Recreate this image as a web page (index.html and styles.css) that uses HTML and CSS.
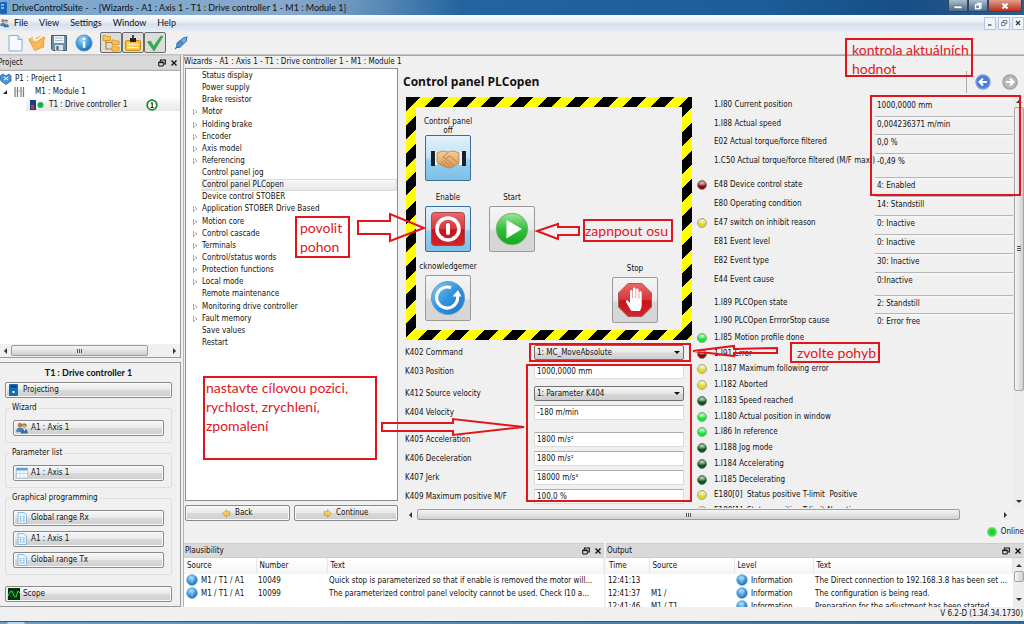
FILE: index.html
```html
<!DOCTYPE html>
<html lang="en">
<head>
<meta charset="utf-8">
<title>DriveControlSuite</title>
<link rel="stylesheet" href="styles.css">
</head>
<body>
<svg class="defs" aria-hidden="true">
  <defs>
    <radialGradient id="gBlue" cx="40%" cy="30%" r="75%"><stop offset="0" stop-color="#a9dcf8"/><stop offset=".55" stop-color="#3f9bdc"/><stop offset="1" stop-color="#1d63ad"/></radialGradient>
    <linearGradient id="gBall" x1="0" y1="0" x2="1" y2="1"><stop offset="0" stop-color="#8ccdf3"/><stop offset=".5" stop-color="#2e93dc"/><stop offset="1" stop-color="#2173c0"/></linearGradient>
    <linearGradient id="gGreen" x1="0" y1="0" x2="0" y2="1"><stop offset="0" stop-color="#9be79b"/><stop offset=".5" stop-color="#35bd3b"/><stop offset="1" stop-color="#14a81c"/></linearGradient>
    <linearGradient id="gRed" x1="0" y1="0" x2="0" y2="1"><stop offset="0" stop-color="#e8686a"/><stop offset=".5" stop-color="#d9343a"/><stop offset=".52" stop-color="#c4141c"/><stop offset="1" stop-color="#d5232a"/></linearGradient>
    <linearGradient id="gGold" x1="0" y1="0" x2="0" y2="1"><stop offset="0" stop-color="#ffe58a"/><stop offset="1" stop-color="#f0b323"/></linearGradient>
    <linearGradient id="gSkin" x1="0" y1="0" x2="0" y2="1"><stop offset="0" stop-color="#f6cf9c"/><stop offset="1" stop-color="#d9954f"/></linearGradient>
    <symbol id="info" viewBox="0 0 16 16"><circle cx="8" cy="8" r="7.2" fill="url(#gBlue)" stroke="#5b92c4" stroke-width=".7"/><rect x="7" y="6.6" width="2.2" height="5.6" fill="#fff"/><circle cx="8.1" cy="4.3" r="1.3" fill="#fff"/></symbol>
    <symbol id="quest" viewBox="0 0 12 12"><circle cx="6" cy="6" r="5.4" fill="url(#gBlue)" stroke="#6fa6d3" stroke-width=".6"/><path d="M4.3 4.6c.2-2 3.6-1.9 3.4 0-.1 1-1.6 1.100-1.600 2.400" fill="none" stroke="#b9e0f8" stroke-width=".9"/><circle cx="6" cy="8.600" r=".6" fill="#b9e0f8"/></symbol>
    <symbol id="float" viewBox="0 0 8 8"><path d="M2.500 2.500V1H7.300V5H5.500" fill="none" stroke="#111" stroke-width="1.200"/><path d="M.8 3.200H5.200V7H.8Z" fill="none" stroke="#111" stroke-width="1"/><path d="M.5 3.400H5.500" stroke="#111" stroke-width="1.400"/></symbol>
    <symbol id="cross" viewBox="0 0 8 8"><path d="M1.500 1.500 6.500 6.500M6.500 1.500 1.500 6.500" stroke="#111" stroke-width="1.400"/></symbol>
    <symbol id="sheet" viewBox="0 0 12 12"><path d="M2 .5H8L10.500 3V11.500H2Z" fill="#e9f4fd" stroke="#6eaede" stroke-width=".8"/><path d="M3.500 4.500H5.500M6.800 4.500H8.800M3.500 6.500H5.500M6.800 6.500H8.800M3.500 9H9M4.500 4V9.500M7.800 4V9.500" stroke="#7db5e0" stroke-width=".6"/></symbol>
    <symbol id="people" viewBox="0 0 12 12"><circle cx="4" cy="3" r="2.300" fill="#c4793a"/><path d="M.3 10C.3 6.500 2 5.500 4 5.500S7.800 6.500 7.800 10Z" fill="#3d85c8"/><circle cx="8.300" cy="4.300" r="2" fill="#e2a56c"/><path d="M6.200 3.500C6.500 1.500 10 1.500 10.500 3.700" fill="none" stroke="#4a3324" stroke-width="1"/><path d="M4.800 11.500C4.800 8 6.500 6.900 8.300 6.900S11.800 8 11.800 11.500Z" fill="#2f6fae"/><path d="M7.600 7 8.300 9.500 9 7Z" fill="#fff"/></symbol>
    <symbol id="goldarrow" viewBox="0 0 9 9"><path d="M4.500 .7 8.300 4.500 4.500 8.300V6.300H1.200V2.700H4.500Z" fill="url(#gGold)" stroke="#c4922a" stroke-width=".7"/></symbol>
  </defs>
</svg>

<div class="app">
  <header class="titlebar">
    <svg class="app-icon" viewBox="0 0 8 12"><rect width="7" height="12" rx="1" fill="#1667b5"/><path d="M1 3H4M1 6H4" stroke="#fff"/></svg>
    <span class="title">DriveControlSuite -&nbsp; - [Wizards - A1 : Axis 1 - T1 : Drive controller 1 - M1 : Module 1]</span>
    <div class="win-buttons">
      <button class="win-btn" type="button" aria-label="Minimize"><svg viewBox="0 0 10 10"><rect x="1" y="5" width="8" height="2.500" fill="#fff" stroke="#345" stroke-width=".4"/></svg></button>
      <button class="win-btn" type="button" aria-label="Restore"><svg viewBox="0 0 10 10"><path d="M4 2.500H8V7H7" fill="none" stroke="#fff" stroke-width="1.300"/><rect x="2.500" y="3.800" width="4" height="4" fill="none" stroke="#fff" stroke-width="1.300"/></svg></button>
      <button class="win-btn win-close" type="button" aria-label="Close"><svg viewBox="0 0 10 10"><path d="M2.500 2.500 7.500 7.500M7.500 2.500 2.500 7.500" stroke="#fff" stroke-width="2"/></svg></button>
    </div>
  </header>

  <nav class="menubar">
    <svg class="menu-icon"><use href="#people"/></svg>
    <button class="menu" type="button">File</button>
    <button class="menu" type="button">View</button>
    <button class="menu" type="button">Settings</button>
    <button class="menu" type="button">Window</button>
    <button class="menu" type="button">Help</button>
    <div class="mdi-buttons">
      <button class="mdi" type="button" aria-label="Minimize window"><svg viewBox="0 0 8 8"><path d="M2 6H5.500" stroke="#334" stroke-width="1.200"/></svg></button>
      <button class="mdi" type="button" aria-label="Restore window"><svg viewBox="0 0 8 8"><path d="M3 3V1.500H6.800V4.500H5.500M1.500 3.500H5V6.500H1.500Z" fill="none" stroke="#667" stroke-width=".9"/></svg></button>
      <button class="mdi" type="button" aria-label="Close window"><svg viewBox="0 0 8 8"><path d="M2 2 6 6M6 2 2 6" stroke="#334" stroke-width="1.200"/></svg></button>
    </div>
  </nav>

  <div class="toolbar">
    <button class="tool" type="button" aria-label="New"><svg viewBox="0 0 18 18"><path d="M3 1.500H12L16 5.500V17H3Z" fill="#f4faff" stroke="#7fb2dd"/><path d="M12 1.500V5.500H16" fill="#cfe6f8" stroke="#7fb2dd"/></svg></button>
    <button class="tool" type="button" aria-label="Open"><svg viewBox="0 0 18 18"><path d="M1 5 5 3.500 7 5 13 1.500 15 3 16 13 7 16Z" fill="#f6c877" stroke="#dc9c3d" stroke-width=".8"/><path d="M5 3.500 9 7 14 1.500" fill="none" stroke="#fdf3dc" stroke-width="2"/><path d="M1 6 6 9 17 3 14 12 7 17Z" fill="#fbb85a" stroke="#e09228" stroke-width=".6"/></svg></button>
    <button class="tool" type="button" aria-label="Save"><svg viewBox="0 0 18 18"><path d="M1.500 1.500H16.500V16.500H3L1.500 15Z" fill="#6f90a3" stroke="#3f5b6c"/><rect x="4" y="2" width="10" height="7" fill="#eef6fa"/><path d="M5 4H13M5 6.500H13" stroke="#8fb3c6" stroke-width=".8"/><rect x="5" y="11" width="8" height="5.500" fill="#d7e3ea"/><rect x="6.500" y="12" width="2" height="4" fill="#3f5b6c"/></svg></button>
    <span class="tool-gap"></span>
    <button class="tool" type="button" aria-label="Information"><svg><use href="#info"/></svg></button>
    <span class="tool-gap wide"></span>
    <div class="tool-group">
      <button class="tool on" type="button" aria-label="Project tree"><svg viewBox="0 0 18 18"><path d="M4 6V15H10M4 8.500H10" fill="none" stroke="#b98324" stroke-width="1.200"/><path d="M1 1.500H4L5 2.500H8.500V6.500H1ZM10 6H12.500L13.500 7H17V10.500H10ZM10 12H12.500L13.500 13H17V17H10Z" fill="#fdc34d" stroke="#d38f20" stroke-width=".8"/></svg></button>
      <button class="tool on" type="button" aria-label="Parameter check"><svg viewBox="0 0 18 18"><rect x="1.500" y="6.500" width="15" height="10" rx="1" fill="#fbc02d" stroke="#cc8a12"/><path d="M3.500 10.500H14.500M3.500 13.500H14.500" stroke="#fff3c0" stroke-width="1.300"/><rect x="6" y="4" width="6" height="4" fill="#222"/><rect x="8" y="1" width="2" height="4" fill="#444"/></svg></button>
      <button class="tool on" type="button" aria-label="Plausibility"><svg viewBox="0 0 18 18"><path d="M1.500 8 4.500 7 7.500 12.500 15 2 16.800 2.500 8 17Z" fill="#2fb34b" stroke="#1f8f38" stroke-width=".6"/></svg></button>
    </div>
    <button class="tool" type="button" aria-label="Connect"><svg viewBox="0 0 18 18"><path d="M3 15 5.500 12.500M13 5 15.500 2.500" stroke="#3d78b5" stroke-width="1.400"/><path d="M5 9 8 6.500 11 10.500 8 13.500 4.500 13.500Z" fill="#4d94d2" stroke="#245f9c" stroke-width=".8"/><path d="M8.500 6 12 3.500 14.500 4 14.500 7 11.500 10Z" fill="#6bb0e4" stroke="#245f9c" stroke-width=".8"/></svg></button>
  </div>

  <main class="main">
    <aside class="side">
      <section class="project">
        <h2 class="dock-title cut">Project<span class="dock-icons"><svg><use href="#float"/></svg><svg><use href="#cross"/></svg></span></h2>
        <ul class="ptree">
          <li class="p0"><svg viewBox="0 0 12 12"><path d="M0 3 3 1 6 3 9 1 11 3V8L6 11.500 1 8Z" fill="#4c97d8" stroke="#22619f" stroke-width=".8"/><path d="M4 4 8 7M8 4 4 7" stroke="#fff"/></svg>P1 : Project 1</li>
          <li class="p1"><span class="open-mark"></span><svg viewBox="0 0 12 12"><path d="M2 1V11M4.500 1V11M8 1V11M10.500 1V11" stroke="#777" stroke-width="1.200"/><path d="M1 5H11" stroke="#aaa"/></svg><span class="p1-text">M1 : Module 1</span></li>
          <li class="p2"><svg viewBox="0 0 14 12"><rect x="0" y="1" width="6" height="10" fill="#1c3f7c"/><rect x="1" y="6" width="3" height="4" fill="#c23a4a"/><circle cx="10.500" cy="6" r="3" fill="#18b04c"/></svg><span class="p2-text">T1 : Drive controller 1</span><svg class="p2-badge" viewBox="0 0 12 12"><circle cx="6" cy="6" r="4.800" fill="#fff" stroke="#158a1e" stroke-width="1.800"/><path d="M4.800 4.500 6.200 3.500V8.500M4.700 8.500H7.600" fill="none" stroke="#111" stroke-width="1"/></svg></li>
        </ul>
        <div class="hscroll"><i class="arr left"></i><i class="hthumb p-thumb"></i><i class="arr right"></i></div>
      </section>
      <section class="device">
        <h3 class="device-title">T1 : Drive controller 1</h3>
        <button class="btn nav" type="button"><svg viewBox="0 0 12 12"><rect x="1" y="0" width="9" height="12" rx="1" fill="#116fb8"/><rect x="2.500" y="1.500" width="6" height="2" fill="#0a3f74"/><rect x="4.500" y="7" width="2" height="2" fill="#fff"/></svg>Projecting</button>
        <fieldset class="group"><legend>Wizard</legend>
          <button class="btn nav" type="button"><svg><use href="#people"/></svg>A1 : Axis 1</button>
        </fieldset>
        <fieldset class="group"><legend>Parameter list</legend>
          <button class="btn nav" type="button"><svg viewBox="0 0 12 12"><rect x=".5" y="1" width="11" height="10" fill="#fff" stroke="#9cc4e4" stroke-width=".8"/><rect x=".5" y="1" width="11" height="2.500" fill="#5aa2dc"/><path d="M4 3V11M8 3V11M1 6.500H11" stroke="#b5d1e8" stroke-width=".8"/></svg>A1 : Axis 1</button>
        </fieldset>
        <fieldset class="group"><legend>Graphical programming</legend>
          <button class="btn nav" type="button"><svg><use href="#sheet"/></svg>Global range Rx</button>
          <button class="btn nav" type="button"><svg><use href="#sheet"/></svg>A1 : Axis 1</button>
          <button class="btn nav" type="button"><svg><use href="#sheet"/></svg>Global range Tx</button>
        </fieldset>
        <button class="btn nav scope" type="button"><svg viewBox="0 0 12 12"><rect width="12" height="12" fill="#062b0b"/><path d="M3 0V12M6 0V12M9 0V12M0 4H12M0 8H12" stroke="#0c5a18" stroke-width=".6"/><path d="M0 8 2 4 4 3 6 8 8 9 10 3 12 5" fill="none" stroke="#2fd34a" stroke-width="1"/></svg>Scope</button>
      </section>
    </aside>

    <div class="work">
      <section class="wizard">
        <h2 class="wizard-title">Wizards - A1 : Axis 1 - T1 : Drive controller 1 - M1 : Module 1</h2>
        <div class="wizard-body">
          <div class="wiz-left">
            <div class="wiz-frame">
              <ul class="wiz-list">
                <li>Status display</li><li>Power supply</li><li>Brake resistor</li>
                <li class="sub">Motor</li><li class="sub">Holding brake</li><li class="sub">Encoder</li><li class="sub">Axis model</li><li class="sub">Referencing</li>
                <li>Control panel jog</li><li class="sel">Control panel PLCopen</li><li>Device control STOBER</li>
                <li class="sub">Application STOBER Drive Based</li><li class="sub">Motion core</li><li class="sub">Control cascade</li><li class="sub">Terminals</li><li class="sub">Control/status words</li><li class="sub">Protection functions</li><li class="sub">Local mode</li>
                <li>Remote maintenance</li><li class="sub">Monitoring drive controller</li><li class="sub">Fault memory</li><li>Save values</li><li>Restart</li>
              </ul>
            </div>
            <div class="wiz-buttons">
              <button class="btn" type="button"><svg class="flip"><use href="#goldarrow"/></svg>Back</button>
              <button class="btn" type="button"><svg><use href="#goldarrow"/></svg>Continue</button>
            </div>
          </div>

          <div class="page">
            <div class="page-head">
              <h1>Control panel PLCopen</h1>
              <div class="page-nav">
                <button class="round" type="button" aria-label="Previous page"><svg viewBox="0 0 16 16"><circle cx="8" cy="8" r="7" fill="#4a7be0" stroke="#7d9bd8" stroke-width="1.500"/><path d="M12 8H5M8 4.500 4.500 8 8 11.500" fill="none" stroke="#fff" stroke-width="2"/></svg></button>
                <button class="round" type="button" aria-label="Next page"><svg viewBox="0 0 16 16"><circle cx="8" cy="8" r="7" fill="#b9b9b9" stroke="#a3a3a3" stroke-width="1.500"/><path d="M4 8H11M8 4.500 11.500 8 8 11.500" fill="none" stroke="#fff" stroke-width="2"/></svg></button>
              </div>
            </div>
            <div class="page-scroll">
              <div class="control">
                <div class="hazard">
                  <div class="pad">
                    <div class="cell"><span>Control panel<br>off</span><button class="big blue" type="button" aria-label="Control panel off"><svg viewBox="0 0 40 40"><path d="M3 13H7V28H3ZM34 13H38V28H34Z" fill="#16202c"/><path d="M7 14H9V27H7ZM31 14H34V27H31Z" fill="#eef3f8"/><path d="M9 15 14 13 20 14 26 13 31 15V25L29 26 23 30 19 29.500 13 27 9 24Z" fill="url(#gSkin)" stroke="#b5743a" stroke-width=".7"/><path d="M20 14.500 15 19 17 20.500 22 18 29 24M18 21 25 27M15.500 22 22 28.500M13 23.500 18 28.500" fill="none" stroke="#b5743a" stroke-width=".8"/></svg></button></div>
                    <div class="cell row2"><span>Enable</span><button class="big blue" type="button" aria-label="Enable"><svg viewBox="0 0 40 40"><rect x="3.500" y="3.500" width="33" height="33" rx="3" fill="url(#gRed)" stroke="#a8474a"/><circle cx="20" cy="20" r="11" fill="none" stroke="#fff" stroke-width="3.600"/><rect x="18" y="14" width="4" height="12" rx="2" fill="#fff"/></svg></button></div>
                    <div class="cell row2"><span>Start</span><button class="big" type="button" aria-label="Start"><svg viewBox="0 0 40 40"><circle cx="20" cy="20" r="15.800" fill="url(#gGreen)" stroke="#6fb774"/><path d="M14.500 11 30 20 14.500 29.500Z" fill="#fff"/></svg></button></div>
                    <div class="cell row3 ack"><span>cknowledgemer</span><button class="big" type="button" aria-label="Acknowledgement"><svg viewBox="0 0 40 40"><circle cx="20" cy="20" r="16.500" fill="url(#gBall)" stroke="#5f9ecb"/><path d="M23 9.800A10.500 10.500 0 1 0 29.500 18" fill="none" stroke="#fff" stroke-width="3.200"/><path d="M24.500 18.500 30 12 33.500 18.500Z" fill="#fff"/></svg></button></div>
                    <div class="cell row3 stop"><span>Stop</span><button class="big" type="button" aria-label="Stop"><svg viewBox="0 0 40 40"><path d="M13 3.500H27L36.500 13V27L27 36.500H13L3.500 27V13Z" fill="url(#gRed)" stroke="#aa5558"/><path d="M16.300 31 11.500 23C10 20.500 12 19.500 13.300 21L15 23V11.500C15 9.500 17.500 9.500 17.500 11.500V18H18V9C18 7 20.600 7 20.600 9V18H21.100V10C21.100 8 23.700 8 23.700 10V18.500H24.200V12.500C24.200 10.700 26.700 10.700 26.700 12.500V25C26.700 28 25.500 29 25 31Z" fill="#fff"/></svg></button></div>
                  </div>
                </div>
                <div class="form">
                  <label for="k402">K402 Command</label><span class="sel-wrap"><select id="k402"><option>1: MC_MoveAbsolute</option></select></span>
                  <label for="k403">K403 Position</label><input id="k403" value="1000,0000 mm">
                  <label for="k412" class="late">K412 Source velocity</label><span class="sel-wrap late"><select id="k412"><option>1: Parameter K404</option></select></span>
                  <label for="k404">K404 Velocity</label><input id="k404" value="-180 m/min">
                  <label for="k405" class="later">K405 Acceleration</label><input id="k405" class="later" value="1800 m/s²">
                  <label for="k406">K406 Deceleration</label><input id="k406" value="1800 m/s²">
                  <label for="k407">K407 Jerk</label><input id="k407" value="18000 m/s³">
                  <label for="k409">K409 Maximum positive M/F</label><input id="k409" value="100,0 %">
                </div>
              </div>

              <div class="status">
                <div class="vals four">
                  <i></i><label for="i80">1.I80 Current position</label><input id="i80" readonly value="1000,0000 mm">
                  <i></i><label for="i88">1.I88 Actual speed</label><input id="i88" readonly value="0,004236371 m/min">
                  <i></i><label for="e02">E02 Actual torque/force filtered</label><input id="e02" readonly value="0,0 %">
                  <i></i><label for="c50">1.C50 Actual torque/force filtered (M/F max.)</label><input id="c50" readonly value="-0,49 %">
                </div>
                <div class="vals six">
                  <i class="led darkred"></i><label for="e48">E48 Device control state</label><input id="e48" readonly value="4: Enabled">
                  <i></i><label for="e80">E80 Operating condition</label><input id="e80" readonly value="14: Standstill">
                  <i class="led yellow"></i><label for="e47">E47 switch on inhibit reason</label><input id="e47" readonly value="0: Inactive">
                  <i></i><label for="e81">E81 Event level</label><input id="e81" readonly value="0: Inactive">
                  <i></i><label for="e82">E82 Event type</label><input id="e82" readonly value="30: Inactive">
                  <i></i><label for="e44">E44 Event cause</label><input id="e44" readonly value="0:Inactive">
                </div>
                <div class="vals two">
                  <i></i><label for="i89">1.I89 PLCOpen state</label><input id="i89" readonly value="2: Standstill">
                  <i></i><label for="i90">1.I90 PLCOpen ErrrorStop cause</label><input id="i90" readonly value="0: Error free">
                </div>
                <ul class="leds">
                  <li><i class="led green"></i>1.I85 Motion profile done</li>
                  <li><i class="led darkred"></i>1.I91 Error</li>
                  <li><i class="led yellow"></i>1.I187 Maximum following error</li>
                  <li><i class="led yellow"></i>1.I182 Aborted</li>
                  <li><i class="led darkgreen"></i>1.I183 Speed reached</li>
                  <li><i class="led green"></i>1.I180 Actual position in window</li>
                  <li><i class="led green"></i>1.I86 In reference</li>
                  <li><i class="led darkgreen"></i>1.I188 Jog mode</li>
                  <li><i class="led darkgreen"></i>1.I184 Accelerating</li>
                  <li><i class="led darkgreen"></i>1.I185 Decelerating</li>
                  <li><i class="led yellow"></i>E180[0]&nbsp; Status positive T-limit&nbsp; Positive</li>
                  <li><i class="led yellow"></i>E180[1]&nbsp; Status positive T-limit Negative</li>
                </ul>
              </div>
              <div class="vscroll"><i class="arr up"></i><i class="vthumb"></i><i class="arr down"></i></div>
            </div>
            <div class="hscroll page-hscroll"><i class="arr left"></i><i class="hthumb w-thumb"></i><i class="arr right"></i></div>
          </div>
        </div>
        <div class="online"><i class="online-dot"></i>Online</div>
      </section>

      <div class="docks">
        <section class="dock">
          <h2 class="dock-title">Plausibility<span class="dock-icons"><svg><use href="#float"/></svg><svg><use href="#cross"/></svg></span></h2>
          <div class="dock-body">
            <table class="plaus">
              <colgroup><col class="c-psrc"><col class="c-pnum"><col></colgroup>
              <thead><tr><th>Source</th><th>Number</th><th>Text</th></tr></thead>
              <tbody>
                <tr><td><svg><use href="#quest"/></svg>M1 / T1 / A1</td><td>10049</td><td>Quick stop is parameterized so that if enable is removed the motor will...</td></tr>
                <tr><td><svg><use href="#quest"/></svg>M1 / T1 / A1</td><td>10099</td><td>The parameterized control panel velocity cannot be used. Check I10 a...</td></tr>
              </tbody>
            </table>
          </div>
        </section>
        <section class="dock">
          <h2 class="dock-title">Output<span class="dock-icons"><svg><use href="#float"/></svg><svg><use href="#cross"/></svg></span></h2>
          <div class="dock-body">
            <table class="out">
              <colgroup><col class="c-time"><col class="c-osrc"><col class="c-level"><col></colgroup>
              <thead><tr><th>Time</th><th>Source</th><th>Level</th><th>Text</th></tr></thead>
              <tbody>
                <tr><td>12:41:13</td><td></td><td><svg><use href="#quest"/></svg>Information</td><td>The Direct connection to 192.168.3.8 has been set ...</td></tr>
                <tr><td>12:41:37</td><td>M1 /</td><td><svg><use href="#quest"/></svg>Information</td><td>The configuration is being read.</td></tr>
                <tr><td>12:41:46</td><td>M1 / T1</td><td><svg><use href="#quest"/></svg>Information</td><td>Preparation for the adjustment has been started.</td></tr>
              </tbody>
            </table>
            <div class="vscroll dock-scroll"><i class="arr up"></i><i class="vthumb"></i><i class="arr down"></i></div>
          </div>
        </section>
      </div>
    </div>
  </main>
  <footer class="statusbar">V 6.2-D (1.34.34.1730)</footer>
  <div class="taskbar"><i class="orb"></i></div>

  <div class="notes">
    <svg class="arrows" viewBox="0 0 1024 624" fill="none" stroke="#e0161c" stroke-width="2">
      <path d="M358 221H390V214L424 228 390 241V234H358Z"/>
      <path d="M579 227V235H558V239L537 231 558 224V227Z"/>
      <path d="M382 423H453V419L524 427 453 435V431H382Z"/>
      <path d="M777 348V353H734V356L693 351 734 346V349Z"/>
    </svg>
    <div class="frame f-command"></div>
    <div class="frame f-params"></div>
    <div class="frame f-values"></div>
    <div class="note n-check">kontrola aktuálních<br>hodnot</div>
    <div class="note n-enable">povolit<br>pohon</div>
    <div class="note n-start">zapnpout osu</div>
    <div class="note n-move">zvolte pohyb</div>
    <div class="note n-set">nastavte cílovou pozici,<br>rychlost, zrychlení,<br>zpomalení</div>
  </div>
</div>
</body>
</html>
```
FILE: styles.css
```css
* { box-sizing: border-box; }
:root {
  --ui: "DejaVu Sans Condensed", "DejaVu Sans", sans-serif;
  --red: #e0161c;
}
body { margin: 0; font: 8px/12px var(--ui); color: #111; background: #f0f0f0; }
h1, h2, h3, ul, fieldset { margin: 0; padding: 0; font-weight: normal; font-size: inherit; }
ul { list-style: none; }
button, input, select { font: inherit; color: inherit; margin: 0; }
svg { display: block; flex: none; }
.defs { position: absolute; width: 0; height: 0; }

.app { position: relative; display: flex; flex-direction: column; height: 100vh; overflow: hidden; }

/* window chrome */
.titlebar { flex: none; display: flex; align-items: center; height: 15px; background: linear-gradient(90deg, #7ba7cf 0, #86a9cb 28%, #6d97c0 34%, #2464a0 45%, #1c5c98 75%, #174e85 88%, #2d5c8c 100%); }
.app-icon { width: 8px; height: 12px; }
.title { padding-left: 4px; font: 9px/12px Lato, sans-serif; white-space: nowrap; }
.win-buttons { display: flex; margin: 0 2px 3px auto; }
.win-btn { display: grid; place-items: center; width: 20px; height: 12px; padding: 0; border: 1px solid #33475c; border-top: 0; background: linear-gradient(#a9bdd0, #4c6a88); }
.win-close { width: 34px; background: linear-gradient(#e2a08e, #b8301a); border-radius: 0 0 3px 0; }
.win-btn svg { width: 10px; height: 10px; }
.menubar { flex: none; display: flex; align-items: center; height: 16px; background: linear-gradient(#fafcff, #e3eaf5 50%, #d6dfee 55%, #e6ecf6); }
.menu-icon { width: 9px; height: 12px; margin-right: 5px; }
.menu { padding: 0; margin-right: 11px; border: 0; background: none; font: 9px/12px Lato, sans-serif; }
.mdi-buttons { display: flex; gap: 2px; margin-left: auto; }
.mdi { display: grid; place-items: center; width: 12px; height: 13px; padding: 0; border: 1px solid #b5c7e0; background: #f2f6fc; }
.mdi svg { width: 8px; height: 8px; }
.toolbar { flex: none; display: flex; align-items: center; gap: 1px; height: 24px; padding-left: 4px; border-bottom: 1px solid #c4c4c4; background: #f0f0f0; }
.tool { display: grid; place-items: center; width: 21px; height: 21px; padding: 0; border: 0; background: none; }
.tool svg { width: 18px; height: 18px; }
.tool-gap { width: 2px; }
.tool-gap.wide { width: 4px; }
.tool-group { display: flex; margin-right: 3px; }
.tool.on { width: 22px; border: 1px solid #6b6b6b; border-radius: 2px; background: #dcdcdc; }

.main { flex: 1; min-height: 0; display: grid; grid-template-columns: 181px 1fr; gap: 2px; }

/* left column */
.side { display: flex; flex-direction: column; gap: 4px; min-height: 0; }
.dock-title { flex: none; display: flex; align-items: center; height: 15px; padding-left: 1px; background: #d9d9d9; border: 1px solid #cdcdcd; border-width: 1px 0; }
.cut { padding-left: 0; margin-left: -2px; }
.dock-icons { display: flex; gap: 4px; margin-left: auto; padding-right: 2px; }
.dock-icons svg { width: 8px; height: 8px; }
.project { flex: 1; display: flex; flex-direction: column; border-right: 1px solid #9a9a9a; border-bottom: 1px solid #9a9a9a; }
.ptree { flex: 1; background: #fff; padding-top: 1px; line-height: 13px; border-top: 1px solid #b0b0b0; }
.ptree li { display: flex; align-items: center; height: 13px; }
.ptree svg { width: 12px; height: 12px; }
.p0 { gap: 3px; }
.p1 { gap: 6px; padding-left: 3px; }
.open-mark { border: 2px solid transparent; border-right-color: #222; border-bottom-color: #222; }
.p1-text { padding-left: 4px; }
.p2 { gap: 5px; margin-left: 26px; padding-left: 4px; background: linear-gradient(#fafafa, #e8e8e8); }
.p2-text { min-width: 80px; }
.ptree .p2 svg { width: 14px; }
.ptree .p2 .p2-badge { width: 12px; margin-left: 12px; }

.hscroll { flex: none; display: flex; align-items: center; height: 13px; background: #f0f0f0; padding: 0 4px; }
.hthumb { height: 11px; border: 1px solid #9d9d9d; border-radius: 2px; background: linear-gradient(#f4f4f4, #e4e4e4 50%, #cfcfcf); display: grid; place-items: center; }
.hthumb::after { content: ""; width: 6px; height: 4px; background: repeating-linear-gradient(90deg, #555 0 1px, transparent 1px 2px); }
.p-thumb { width: 137px; margin-left: 4px; }
.arr { border: 3px solid transparent; width: 0; height: 0; flex: none; }
.arr.left { border-right-color: #333; border-left: 0; }
.arr.right { border-left-color: #333; border-right: 0; margin-left: auto; }
.arr.up { border-bottom-color: #333; border-top: 0; }
.arr.down { border-top-color: #333; border-bottom: 0; margin-top: auto; }
.vscroll { display: flex; flex-direction: column; align-items: center; width: 11px; padding: 5px 0; background: #ececec; }
.vthumb { width: 10px; margin-top: 4px; border: 1px solid #a5a5a5; border-radius: 2px; background: linear-gradient(90deg, #f6f6f6, #e2e2e2 50%, #cfcfcf); display: grid; place-items: center; }
.vthumb::after { content: ""; width: 4px; height: 6px; background: repeating-linear-gradient(#555 0 1px, transparent 1px 2px); }

.device { flex: none; display: flex; flex-direction: column; padding: 4px 8px 4px 5px; border: 1px solid #9a9a9a; border-left: 0; }
.device-title { text-align: center; font: bold 9px/12px Lato, sans-serif; margin-bottom: 3px; }
.btn { display: flex; align-items: center; height: 16px; padding: 0 2px; border: 1px solid #8a8a8a; border-radius: 2px; background: linear-gradient(#f6f6f6, #e9e9e9 48%, #d9d9d9 52%, #cecece); box-shadow: inset 0 0 0 1px #fafafa; }
.nav { width: 100%; gap: 3px; }
.nav svg { width: 12px; height: 12px; }
.group { display: flex; flex-direction: column; gap: 5px; min-width: 0; margin: 4px 0 0; padding: 6px 7px 6px; border: 1px solid #dedede; border-radius: 2px; }
.group legend { padding: 0 2px; margin-left: -3px; line-height: 12px; }
.scope { margin-top: 11px; }

/* wizard */
.work { display: flex; flex-direction: column; min-width: 0; min-height: 0; border-top: 1px solid #a5a5a5; border-left: 1px solid #b5b5b5; }
.wizard { flex: 1; min-height: 0; display: flex; flex-direction: column; }
.wizard-title { flex: none; height: 12px; line-height: 11px; }
.wizard-body { flex: 1; min-height: 0; display: grid; grid-template-columns: 214px 1fr; }
.wiz-left { display: flex; flex-direction: column; gap: 4px; padding-left: 1px; min-height: 0; }
.wiz-frame { flex: 1; min-height: 0; border: 1px solid #8e8e8e; background: #fff; }
.wiz-list { display: grid; grid-auto-rows: 1fr; min-height: 280px; padding-top: 1px; line-height: 10px; }
.wiz-list li { display: flex; align-items: center; margin-left: 5px; padding-left: 11px; white-space: nowrap; }
.wiz-list .sub { padding-left: 0; }
.wiz-list .sub::before { content: ""; width: 11px; height: 6px; background: linear-gradient(#aaa, #aaa) 2px 0 / 1px 6px no-repeat, linear-gradient(35deg, transparent 46%, #aaa 47% 60%, transparent 61%) 2px 0 / 4px 3px no-repeat, linear-gradient(145deg, transparent 38%, #aaa 40% 53%, transparent 54%) 2px 3px / 4px 3px no-repeat; }
.wiz-list .sel { margin-left: 15px; padding-left: 1px; background: linear-gradient(#f8f8f8, #e6e6e6); border: 1px solid #dadada; border-left: 0; }
.wiz-buttons { flex: none; display: grid; grid-template-columns: 1fr 1fr; gap: 4px; }
.wiz-buttons .btn { justify-content: center; gap: 4px; }
.wiz-buttons svg { width: 9px; height: 9px; }
.flip { transform: scaleX(-1); }

.page { display: flex; flex-direction: column; min-width: 0; min-height: 0; padding-left: 5px; }
.page-head { flex: none; display: flex; align-items: center; justify-content: space-between; height: 27px; }
.page-head h1 { font: bold 12px/16px "Open Sans", sans-serif; white-space: nowrap; }
.page-nav { display: flex; align-items: center; gap: 11px; height: 22px; padding: 0 6px 0 8px; border-left: 1px solid #aaa; }
.round { width: 16px; height: 16px; padding: 0; border: 0; background: none; }
.page-scroll { flex: 1; min-height: 0; display: grid; grid-template-columns: 289px 1fr 11px; overflow: hidden; line-height: 10px; }
.control { padding: 2px 0 0 2px; min-height: 0; overflow: hidden; }
.hazard { width: 286px; margin-left: 1px; padding: 10px; background: repeating-linear-gradient(135deg, #000 0 10px, #ff0 10px 20px); }
.pad { display: grid; grid-template: 74px 71px 71px / 46px 46px 1fr; column-gap: 18px; padding: 0 24px 7px 9px; background: #f0f0f0; }
.cell { display: flex; flex-direction: column; align-items: center; justify-content: flex-end; gap: 4px; width: 46px; text-align: center; line-height: 9px; white-space: nowrap; }
.cell:first-child { grid-column: 1 / -1; gap: 0; }
.row2 { grid-row: 2; }
.row3 { grid-row: 3; }
.ack { justify-content: center; padding-top: 8px; }
.stop { grid-column: 3; justify-self: end; }
.big { display: grid; place-items: center; width: 46px; height: 46px; padding: 0; border: 1px solid #9a9a9a; border-radius: 2px; background: linear-gradient(#f4f4f4, #ebebeb 50%, #d8d8d8 55%, #d5d5d5); }
.big.blue { border-color: #3d6d92; background: linear-gradient(#e2f1fa, #c2e2f5 50%, #95cdee 55%, #7ec0e8); }
.big svg { width: 40px; height: 40px; }

.form { display: grid; grid-template-columns: 129px 150px; row-gap: 4px; align-items: center; padding-top: 5px; }
.form input, .form select { width: 100%; height: 15px; padding: 0 2px; border: 1px solid #dcdcdc; border-top-color: #ababab; border-radius: 1px; background: #fff; }
.form select { appearance: none; border: 1px solid #707070; border-radius: 2px; background: linear-gradient(#f4f4f4, #e9e9e9 48%, #dadada 52%, #cdcdcd); }
.sel-wrap { display: block; position: relative; }
.sel-wrap::after { content: ""; position: absolute; right: 4px; top: 6px; border: 3px solid transparent; border-top-color: #111; border-bottom: 0; pointer-events: none; }
.late { margin-top: 3px; }
.later { margin-top: 8px; }

.status { min-width: 0; min-height: 0; padding: 1px 0 0 5px; overflow: hidden; }
.vals { display: grid; grid-template-columns: 17px 161px 1fr; grid-auto-rows: 1fr; align-items: center; }
.four { height: 74px; }
.six { height: 113px; margin-top: 6px; }
.two { height: 36px; margin-top: 5px; }
.vals label { white-space: nowrap; }
.vals input { width: 100%; min-width: 0; height: 16px; padding: 0 2px; border: 0; border-top: 1px solid #b5b5b5; background: linear-gradient(#f8f8f8, #f0f0f0 3px); }
.four input:first-of-type { border-color: transparent; }
.leds { display: grid; grid-auto-rows: 1fr; height: 189px; }
.leds li { display: flex; align-items: center; gap: 7px; white-space: nowrap; }
.led { width: 10px; height: 10px; border-radius: 50%; border: 1px solid #a8a8a0; background: radial-gradient(ellipse 70% 45% at 50% 25%, #ffffffcc 0, #ffffff00 100%), var(--c); }
.darkred { --c: #7c0a0e; border-color: #9a8080; }
.yellow { --c: #ddd622; }
.green { --c: #10e62e; border-color: #8aa58c; }
.darkgreen { --c: #0b5218; border-color: #6c8c70; }
.page-scroll > .vscroll .vthumb { height: 284px; }
.page-hscroll { padding: 0 17px 0 6px; }
.w-thumb { width: 543px; margin-left: 5px; }

.online { flex: none; display: flex; align-items: center; justify-content: flex-end; gap: 4px; height: 22px; }
.online-dot { width: 10px; height: 10px; border-radius: 50%; background: radial-gradient(#1fd02a 30%, #8be88f 80%); }

/* docks */
.docks { flex: none; display: grid; grid-template-columns: 420px 1fr; gap: 2px; height: 64px; }
.dock { display: flex; flex-direction: column; min-width: 0; min-height: 0; }
.dock-body { flex: 1; min-height: 0; display: flex; background: #fff; overflow: hidden; }
.dock-body table { flex: 1; width: 100%; align-self: flex-start; table-layout: fixed; border-collapse: collapse; white-space: nowrap; }
.dock-body th { height: 16px; padding: 0 3px; text-align: left; font-weight: normal; border-right: 1px solid #e8e8e8; background: linear-gradient(#fff, #f5f5f5); }
.dock-body td { height: 13px; padding: 0 2px; line-height: 13px; overflow: hidden; }
.dock-body td svg { display: inline-block; width: 12px; height: 12px; margin-right: 3px; vertical-align: top; }
.c-psrc { width: 72px; }
.c-pnum { width: 71px; }
.c-time { width: 43px; }
.c-osrc { width: 85px; }
.c-level { width: 79px; }
.dock-scroll { padding: 6px 0; }
.dock-scroll .vthumb { height: 11px; }
.dock-scroll .vthumb::after { content: none; }

.statusbar { flex: none; height: 14px; padding-right: 1px; line-height: 14px; text-align: right; white-space: nowrap; background: #f0f0f0; }
.taskbar { flex: none; height: 3px; background: linear-gradient(90deg, #6ba0c9, #4b87b8 50%, #2d6ca3); border-top: 1px solid #41576b; }
.orb { display: block; width: 18px; height: 2px; margin-left: 7px; background: #b9d3e8; border-radius: 9px 9px 0 0; }

/* callouts drawn over the window */
.notes { position: absolute; inset: 0; pointer-events: none; }
.arrows { position: absolute; left: 0; top: 0; width: 1024px; height: 624px; }
.frame, .note { position: absolute; border: 2px solid var(--red); }
.note { color: var(--red); font: 14px/19px Lato, "Open Sans", sans-serif; white-space: nowrap; }
.f-command { left: 529px; top: 343px; width: 162px; height: 19px; }
.f-params { left: 526px; top: 364px; width: 166px; height: 138px; }
.f-values { left: 870px; top: 95px; width: 151px; height: 101px; }
.n-check { left: 845px; top: 38px; width: 128px; height: 39px; padding-left: 5px; }
.n-enable { left: 295px; top: 216px; width: 55px; height: 42px; padding-left: 3px; }
.n-start { left: 583px; top: 219px; width: 90px; height: 23px; }
.n-move { left: 790px; top: 342px; width: 90px; height: 21px; padding-left: 5px; line-height: 18px; }
.n-set { left: 203px; top: 376px; width: 174px; height: 84px; padding-left: 1px; }
```
